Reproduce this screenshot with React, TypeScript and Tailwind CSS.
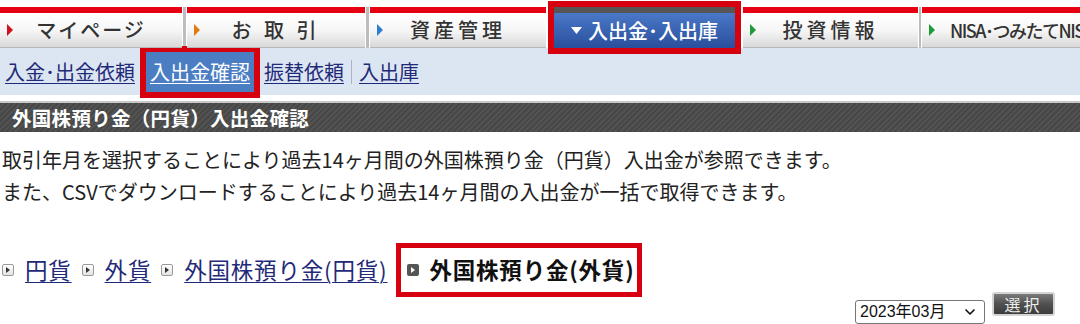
import { ChevronDown } from "lucide-react";

const jp = "font-['Meiryo','Noto_Sans_CJK_JP',sans-serif]";

function Tri({ color }: { color: string }) {
  return (
    <svg width="6" height="12" viewBox="0 0 6 12" className="absolute left-[7px] top-1/2 -translate-y-1/2">
      <path d="M0 0 L6 6 L0 12 Z" fill={color} />
    </svg>
  );
}

function Tab({ w, color, label, cls = "" }: { w: string; color: string; label: string; cls?: string }) {
  return (
    <div
      className={`relative ${w} h-[41px] shrink-0 border-t-[6px] border-t-[#e60012] border-b border-[#b8b8b8] bg-gradient-to-b from-white via-[#f7f7f7] to-[#d9d9d9] flex items-center justify-center overflow-hidden`}
    >
      <Tri color={color} />
      <span className={`text-[20px] text-[#333] font-medium whitespace-nowrap ${cls}`}>{label}</span>
    </div>
  );
}

function Sep({ w }: { w: string }) {
  return <div className={`${w} h-[41px] shrink-0 bg-[#bdbdbd] border-x border-white`} />;
}

function Crumb({ label }: { label: string }) {
  return (
    <span className="flex items-center gap-[11px]">
      <span className="w-[12px] h-[12px] rounded-[2px] border border-[#9a9a9a] bg-gradient-to-b from-white to-[#e4e4e4] flex items-center justify-center">
        <svg width="4" height="6" viewBox="0 0 4 6">
          <path d="M0 0 L4 3 L0 6 Z" fill="#333" />
        </svg>
      </span>
      <a className="text-[#1f2a78] underline underline-offset-[3px] decoration-1">{label}</a>
    </span>
  );
}

export default function App() {
  return (
    <div className={`w-[1080px] h-[324px] overflow-hidden bg-white ${jp}`}>
      {/* main tabs */}
      <div className="flex items-start pt-[7px]">
        <Tab w="w-[182px]" color="#d0101b" label="マイページ" cls="tracking-[2px]" />
        <Sep w="w-[5px]" />
        <Tab w="w-[178px]" color="#e07a10" label="お 取 引" cls="tracking-[4px]" />
        <Sep w="w-[5px]" />
        <Tab w="w-[176px]" color="#2f7bd0" label="資産管理" cls="tracking-[4px]" />
        <div className="w-[8px]" />
        <div className="w-[181px] h-[41px] shrink-0 outline-[6px] outline-solid outline-[#d7000f] border-t-[6px] border-t-[#555] bg-gradient-to-b from-[#4a78c8] to-[#2a4f9c] flex items-center justify-center gap-[6px]">
          <svg width="11" height="7" viewBox="0 0 11 7">
            <path d="M0 0 L11 0 L5.5 7 Z" fill="#fff" />
          </svg>
          <span className="text-[20px] text-white font-medium whitespace-nowrap">入出金･入出庫</span>
        </div>
        <div className="w-[8px]" />
        <Tab w="w-[175px]" color="#1f9a3a" label="投資情報" cls="tracking-[4px]" />
        <Sep w="w-[4px]" />
        <div className="relative flex-1 h-[41px] border-t-[6px] border-t-[#e60012] border-b border-[#b8b8b8] bg-gradient-to-b from-white via-[#f7f7f7] to-[#d9d9d9] flex items-center overflow-hidden">
          <Tri color="#1f9a3a" />
          <span className="pl-[28px] text-[18px] text-[#333] font-medium tracking-[-1.5px] whitespace-nowrap">
            NISA･つみたてNISA
          </span>
        </div>
      </div>

      {/* sub navigation */}
      <div className="h-[47px] bg-[#dce6f2] flex items-center pl-[5px] text-[20px]">
        <a className="text-[#1f2a78] underline underline-offset-[3px] decoration-1">入金･出金依頼</a>
        <span className="ml-[11px] h-[40px] px-[4px] bg-[#4a7dc2] outline-[6px] outline-solid outline-[#d7000f] flex items-center">
          <a className="text-white underline underline-offset-[3px] decoration-1">入出金確認</a>
        </span>
        <a className="ml-[10px] text-[#1f2a78] underline underline-offset-[3px] decoration-1">振替依頼</a>
        <span className="mx-[7px] w-px h-[24px] bg-[#a9b5c6]" />
        <a className="text-[#1f2a78] underline underline-offset-[3px] decoration-1">入出庫</a>
      </div>

      {/* section header */}
      <div className="mt-[6px] border-t-2 border-[#c8c8c8] h-[31px] bg-[repeating-linear-gradient(135deg,#474747_0px,#474747_2px,#525252_2px,#525252_4px)] flex items-center pl-[12px]">
        <span className="text-white text-[19.5px] font-bold tracking-[0.3px]">外国株預り金（円貨）入出金確認</span>
      </div>

      {/* description */}
      <div className="mt-[12px] pl-[2px] text-[20px] leading-[32px] text-[#222]">
        <p>取引年月を選択することにより過去14ヶ月間の外国株預り金（円貨）入出金が参照できます。</p>
        <p>また、CSVでダウンロードすることにより過去14ヶ月間の入出金が一括で取得できます。</p>
      </div>

      {/* currency breadcrumbs */}
      <div className="mt-[40px] h-[44px] flex items-center pl-[2px] text-[22.5px] tracking-[0.8px] gap-[10px]">
        <Crumb label="円貨" />
        <Crumb label="外貨" />
        <Crumb label="外国株預り金(円貨)" />
        <span className="ml-[4px] h-[44px] pl-[6px] pr-[3px] outline-[5px] outline-solid outline-[#d7000f] flex items-center gap-[10px]">
          <span className="w-[12px] h-[12px] rounded-[2px] bg-[#555] flex items-center justify-center">
            <svg width="4" height="6" viewBox="0 0 4 6">
              <path d="M0 0 L4 3 L0 6 Z" fill="#fff" />
            </svg>
          </span>
          <span className="font-bold text-[#111]">外国株預り金(外貨)</span>
        </span>
      </div>

      {/* month selector */}
      <div className="flex items-start justify-end pr-[25px] gap-[7px]">
        <div className="mt-[8px] w-[130px] h-[24px] border border-[#767676] rounded-[3px] bg-white flex items-center justify-between pl-[4px] pr-[6px] font-['Liberation_Sans','Noto_Sans_CJK_JP',sans-serif] text-[16px] text-[#111]">
          <span>2023年03月</span>
          <ChevronDown size={16} strokeWidth={2.5} />
        </div>
        <div className="w-[63px] h-[24px] rounded-[3px] border-2 border-[#d4d4d4] bg-gradient-to-b from-[#7a7a7a] via-[#505050] to-[#3c3c3c] flex items-center justify-center">
          <span className="text-[#eee] text-[16px] tracking-[3px] leading-none">選択</span>
        </div>
      </div>
    </div>
  );
}
